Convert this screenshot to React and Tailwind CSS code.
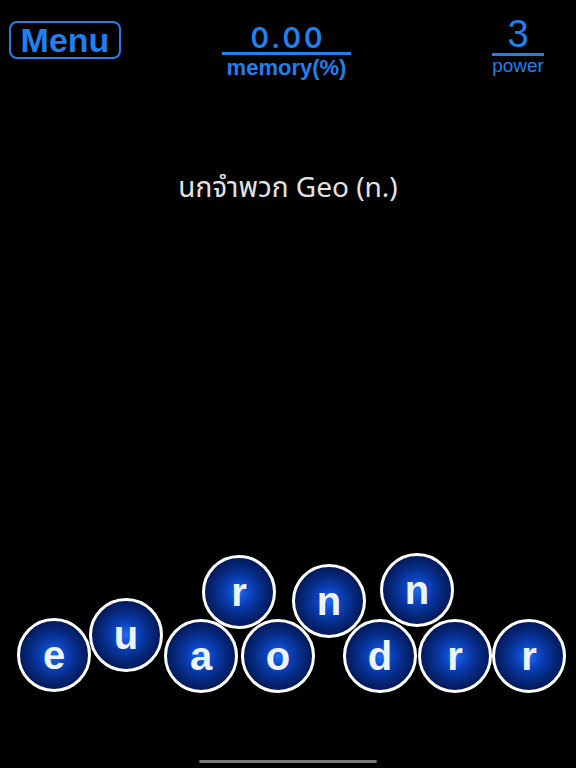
import React from "react";

const blue = "text-[#1f80ee]";

const bubbles = [
  { ch: "e", pos: "left-[17px] top-[68px]" },
  { ch: "u", pos: "left-[89px] top-[48px]" },
  { ch: "r", pos: "left-[202px] top-[5px]" },
  { ch: "a", pos: "left-[164px] top-[69px]" },
  { ch: "o", pos: "left-[241px] top-[69px]" },
  { ch: "n", pos: "left-[292px] top-[14px]" },
  { ch: "n", pos: "left-[380px] top-[3px]" },
  { ch: "d", pos: "left-[343px] top-[69px]" },
  { ch: "r", pos: "left-[418px] top-[69px]" },
  { ch: "r", pos: "left-[492px] top-[69px]" },
];

const Bubble = ({ ch, pos }) => (
  <div
    className={`absolute ${pos} w-[74px] h-[74px] rounded-full border-[3px] border-white bg-[radial-gradient(circle,#1c6cf4_0%,#0b42bc_25%,#062a82_50%,#03164f_76%,#020b2a_100%)] flex items-center justify-center`}
  >
    <span className="text-[#eef4ff] font-bold text-[40px] leading-none font-['Liberation_Sans',Arial,sans-serif]">
      {ch}
    </span>
  </div>
);

export default function App() {
  return (
    <div className="w-full h-[768px] bg-black flex flex-col overflow-hidden font-['Liberation_Sans',Arial,sans-serif]">
      {/* top bar */}
      <div className="h-[80px] flex items-start">
        <button
          className={`ml-[9px] mt-[21px] w-[112px] h-[38px] rounded-[8px] border-2 border-[#1f80ee] flex items-center justify-center ${blue}`}
        >
          <span className="text-[34px] font-bold leading-none">Menu</span>
        </button>

        <div className="ml-[101px] mt-[24px] w-[129px] flex flex-col items-center">
          <span
            className={`pl-[3px] text-[28px] font-semibold leading-none tracking-[3px] font-['Inter',sans-serif] ${blue}`}
          >
            0.00
          </span>
          <div className="w-full h-[3px] bg-[#1f80ee]" />
          <span className={`mt-[2px] text-[22px] font-bold leading-none ${blue}`}>
            memory(%)
          </span>
        </div>

        <div className="ml-[141px] mt-[15px] w-[52px] flex flex-col items-center">
          <span className={`text-[38px] leading-none ${blue}`}>3</span>
          <div className="w-full h-[2.5px] bg-[#1f80ee]" />
          <span className={`text-[19px] leading-none ${blue}`}>power</span>
        </div>
      </div>

      {/* clue */}
      <p className="mt-[92px] text-center text-[28px] leading-none text-[#e2e2e2] font-['Noto_Sans','Noto_Sans_Thai',sans-serif]">
        นกจำพวก Geo (n.)
      </p>

      <div className="flex-1" />

      {/* letter pile */}
      <div className="relative h-[144px] w-full">
        {bubbles.map((b, i) => (
          <Bubble key={i} ch={b.ch} pos={b.pos} />
        ))}
      </div>

      <div className="mt-[66px] mb-[5px] mx-auto w-[178px] h-[3px] rounded-full bg-[#7a7a7a]" />
    </div>
  );
}
